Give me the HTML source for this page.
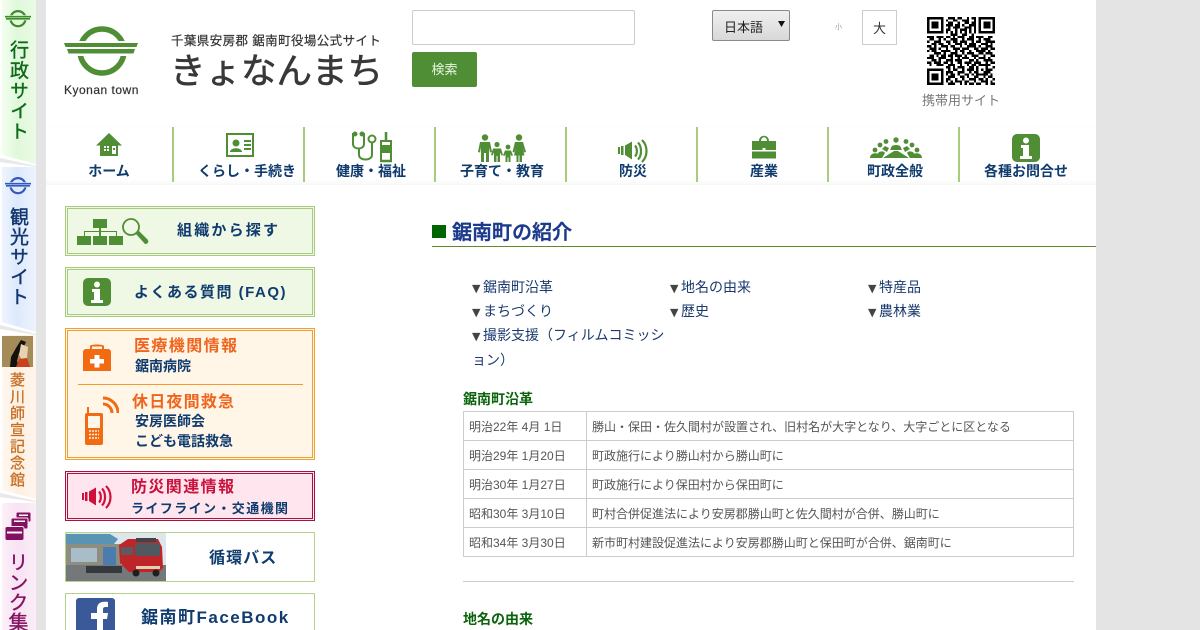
<!DOCTYPE html>
<html lang="ja"><head><meta charset="utf-8"><title>きょなんまち</title>
<style>
html,body{margin:0;padding:0;width:1200px;height:630px;overflow:hidden;background:#e4e4e4}
body{position:relative;font-family:"Liberation Sans","Noto Sans CJK JP",sans-serif;color:#444}
.a{position:absolute;white-space:nowrap;line-height:1}
#w{position:absolute;left:46px;top:0;width:1050px;height:630px;background:#fff}
.tab{position:absolute;left:0;width:36px;background:#fff}
.tab i{position:absolute;left:2px;top:0;right:0;bottom:0}
.v{position:absolute;writing-mode:vertical-rl;white-space:nowrap;line-height:1}
.sep{position:absolute;top:127px;width:2px;height:55px;background:#a9cb7e}
.nl{position:absolute;top:163px;width:130px;text-align:center;font-size:14px;font-weight:700;color:#0f3b6e;line-height:16px}
.box{position:absolute;left:65px;width:248px;box-sizing:content-box;border:1px solid}
.box b{position:absolute;left:1px;top:1px;right:1px;bottom:1px;border:1px solid}
.t{font-weight:700;color:#0f3b6e}
.lk{position:absolute;font-size:14px;line-height:24px;color:#1a3a6e;white-space:nowrap}
.lk s{text-decoration:none;color:#444;font-family:"DejaVu Sans",sans-serif;font-size:11px;display:inline-block;width:11px;text-indent:0;overflow:visible}
table{position:absolute;left:463px;top:411px;width:611px;border-collapse:collapse;font-size:12px;color:#555;table-layout:fixed}
td{border:1px solid #ccc;height:28px;padding:2px 5px 0;box-sizing:border-box;line-height:14px;white-space:nowrap}
tr{height:29px}
h3{position:absolute;margin:0;left:463px;font-size:14px;line-height:16px;color:#0b640b;font-weight:700}
</style></head><body>
<div id="w"></div>

<!-- side tabs -->
<div class="tab" style="top:0;height:165px"><i style="background:linear-gradient(90deg,#f3fff0,#e0f8da 45%,#eafbe5)"></i></div>
<svg class="a" style="left:0;top:155px" width="46" height="14"><polygon points="0,0 2,0 36,9 36,14 0,14" fill="#fff"/><polygon points="0,3 36,11 36,12 0,7" fill="#e8e8e8"/></svg>
<svg class="a" style="left:5px;top:10px" width="26" height="18" viewBox="0 0 76 52"><circle cx="38" cy="25" r="22" fill="none" stroke="#3f8a2a" stroke-width="6.500"/><rect y="15" width="76" height="15" fill="#e4f9de"/><path d="M0 17h76v4.500H0zM3 23h70v5H3z" fill="#3f8a2a"/></svg>
<div class="v" style="left:8px;top:40px;font-size:19px;letter-spacing:1.300px;color:#0c6a18;-webkit-text-stroke:.4px #0c6a18">行政サイト</div>

<div class="tab" style="top:167px;height:165px"><i style="background:linear-gradient(90deg,#eef4ff,#dde9fb 45%,#eef4fe)"></i></div>
<svg class="a" style="left:0;top:322px" width="46" height="14"><polygon points="0,0 2,0 36,10 36,14 0,14" fill="#fff"/><polygon points="0,3 36,12 36,13 0,7" fill="#e8e8e8"/></svg>
<svg class="a" style="left:5px;top:177px" width="26" height="18" viewBox="0 0 76 52"><circle cx="38" cy="25" r="22" fill="none" stroke="#3558c0" stroke-width="6.500"/><rect y="15" width="76" height="15" fill="#e2ecfb"/><path d="M0 17h76v4.500H0zM3 23h70v5H3z" fill="#3558c0"/></svg>
<div class="v" style="left:8px;top:207px;font-size:19px;letter-spacing:1px;color:#12366e;-webkit-text-stroke:.4px #12366e">観光サイト</div>

<div class="tab" style="top:335px;height:165px"><i style="background:linear-gradient(90deg,#fff8f1,#fdf0e2 45%,#fff5ec)"></i></div>
<svg class="a" style="left:2px;top:336px" width="31" height="31" viewBox="0 0 31 31"><rect width="31" height="31" fill="#a58b58"/><path d="M8 31 9 21 14 12 19 4 24 6 21 12 17 17 15 25 17 31z" fill="#15100c"/><path d="M19 8 26 11 25 22 20 24 17 19z" fill="#e8d2b4"/><path d="M14 31 17 23 25 22 28 31z" fill="#c8401e"/></svg>
<div class="v" style="left:9px;top:372px;font-size:15px;letter-spacing:1.600px;color:#c56f24;-webkit-text-stroke:.3px #c56f24">菱川師宣記念館</div>
<svg class="a" style="left:0;top:490px" width="46" height="14"><polygon points="0,0 2,0 36,9 36,14 0,14" fill="#fff"/><polygon points="0,3 36,11 36,12 0,7" fill="#e8e8e8"/></svg>

<div class="tab" style="top:503px;height:127px"><i style="background:linear-gradient(90deg,#fdf0f9,#f8e2f3 45%,#fbeef8)"></i></div>
<svg class="a" style="left:4px;top:511px" width="28" height="30" viewBox="0 0 28 30"><g fill="#82125f" stroke="#fae8f6" stroke-width="1"><rect x="12" y="1" width="15" height="10" rx="1.500"/><rect x="7" y="7" width="17" height="11" rx="1.500"/><rect x="1" y="15.500" width="19" height="14" rx="2"/></g><path d="M3 20.500h15v2H3zM15 3.500h9v1.500h-9zM10 9.500h11v1.500H10z" fill="#fff"/></svg>
<div class="v" style="left:6px;top:552px;font-size:20px;letter-spacing:0;color:#82125f;-webkit-text-stroke:.3px #82125f">リンク集</div>

<!-- logo -->
<svg class="a" style="left:64px;top:26px" width="76" height="52" viewBox="0 0 76 52">
<circle cx="38" cy="25" r="22" fill="none" stroke="#4f8e35" stroke-width="5.500"/>
<rect x="0" y="15" width="76" height="15" fill="#fff"/>
<path d="M0 17h74l-1.500 4H1.500zM3 23h68l-1.500 4.500H4.500z" fill="#4f8e35"/>
</svg>
<div class="a" style="left:64px;top:84px;font-size:12px;letter-spacing:.5px;color:#333;-webkit-text-stroke:.2px #333">Kyonan town</div>
<div class="a" style="left:171px;top:35px;font-size:12.500px;letter-spacing:.4px;color:#333;-webkit-text-stroke:.2px #333">千葉県安房郡 鋸南町役場公式サイト</div>
<div class="a" style="left:170px;top:52px;font-size:35.500px;color:#383838;line-height:38px;-webkit-text-stroke:.6px #383838">きょなんまち</div>

<!-- search -->
<div class="a" style="left:412px;top:10px;width:221px;height:33px;border:1px solid #ccc;border-radius:2px;background:#fff"></div>
<div class="a" style="left:412px;top:52px;width:65px;height:35px;background:#4f8e35;border-radius:2px;color:#e8f4e0;font-size:13px;line-height:35px;text-align:center">検索</div>
<div class="a" style="left:712px;top:10px;width:76px;height:29px;border:1px solid #8a8a8a;border-radius:2px;background:linear-gradient(#f0f0f0,#d8d8d8);color:#222;font-size:13px;line-height:33px;text-indent:11px">日本語</div>
<svg class="a" style="left:778px;top:21px" width="7" height="6"><polygon points="0,0 7,0 3.500,6" fill="#111"/></svg>
<div class="a" style="left:835px;top:24px;font-size:7px;color:#999">小</div>
<div class="a" style="left:862px;top:10px;width:33px;height:33px;border:1px solid #ccc;color:#333;font-size:13px;line-height:35px;text-align:center;background:#fff">大</div>

<!-- QR -->
<svg class="a" style="left:927px;top:17px" width="68" height="68" viewBox="0 0 29 29" shape-rendering="crispEdges">
<g fill="#000"><path fill-rule="evenodd" d="M0 0h7v7H0zM1 1v5h5V1zM2 2h3v3H2zM22 0h7v7h-7zM23 1v5h5V1zM24 2h3v3h-3zM0 22h7v7H0zM1 23v5h5v-5zM2 24h3v3H2z"/></g>
<path stroke="#000" fill="none" d="M9 .5h3M13 .5h2M17 .5h1M19 .5h2M8 1.500h1M11 1.500h2M15 1.500h3M20 1.500h1M9 2.500h2M13 2.500h1M16 2.500h2M19 2.500h2M8 3.500h3M12 3.500h2M15 3.500h1M18 3.500h3M9 4.500h1M11 4.500h3M16 4.500h3M20 4.500h1M8 5.500h2M12 5.500h1M14 5.500h3M18 5.500h1M20 5.500h1M8 6.500h1M10 6.500h1M12 6.500h1M14 6.500h1M16 6.500h1M18 6.500h1M20 6.500h1M10 7.500h3M15 7.500h2M19 7.500h1M0 8.500h3M4 8.500h3M8 8.500h2M11 8.500h1M13 8.500h3M18 8.500h2M21 8.500h3M26 8.500h2M1 9.500h2M5 9.500h1M7 9.500h1M10 9.500h3M15 9.500h1M17 9.500h3M22 9.500h1M24 9.500h3M0 10.500h1M3 10.500h3M8 10.500h2M11 10.500h2M14 10.500h3M19 10.500h1M21 10.500h2M25 10.500h4M2 11.500h2M5 11.500h2M9 11.500h1M12 11.500h3M16 11.500h1M18 11.500h3M23 11.500h3M27 11.500h1M0 12.500h2M3 12.500h1M6 12.500h3M10 12.500h2M14 12.500h1M17 12.500h4M22 12.500h1M25 12.500h3M1 13.500h3M5 13.500h1M8 13.500h1M11 13.500h3M15 13.500h3M20 13.500h2M23 13.500h3M27 13.500h2M0 14.500h1M2 14.500h2M6 14.500h4M12 14.500h1M14 14.500h2M18 14.500h1M21 14.500h4M26 14.500h1M3 15.500h3M7 15.500h1M10 15.500h3M15 15.500h1M17 15.500h3M22 15.500h2M25 15.500h3M1 16.500h2M4 16.500h1M6 16.500h2M9 16.500h2M12 16.500h3M16 16.500h1M19 16.500h3M24 16.500h1M27 16.500h2M0 17.500h3M5 17.500h3M10 17.500h1M13 17.500h1M15 17.500h3M20 17.500h1M22 17.500h3M26 17.500h1M2 18.500h2M5 18.500h1M8 18.500h3M12 18.500h3M18 18.500h2M21 18.500h1M24 18.500h4M0 19.500h2M3 19.500h3M7 19.500h2M10 19.500h1M13 19.500h2M16 19.500h3M20 19.500h3M25 19.500h1M27 19.500h2M1 20.500h1M4 20.500h3M9 20.500h3M14 20.500h1M17 20.500h1M19 20.500h2M22 20.500h5M8 21.500h2M11 21.500h1M13 21.500h3M18 21.500h2M21 21.500h1M25 21.500h1M28 21.500h1M9 22.500h1M11 22.500h2M15 22.500h1M17 22.500h3M21 22.500h1M23 22.500h1M25 22.500h3M8 23.500h3M13 23.500h3M18 23.500h1M20 23.500h2M24 23.500h3M8 24.500h1M10 24.500h2M13 24.500h1M16 24.500h2M19 24.500h1M21 24.500h5M27 24.500h1M9 25.500h3M14 25.500h2M17 25.500h1M20 25.500h2M24 25.500h1M26 25.500h2M8 26.500h2M12 26.500h1M15 26.500h1M18 26.500h3M22 26.500h2M25 26.500h1M28 26.500h1M8 27.500h1M10 27.500h1M12 27.500h3M16 27.500h2M20 27.500h1M23 27.500h3M27 27.500h1M9 28.500h3M14 28.500h1M16 28.500h1M18 28.500h2M21 28.500h2M25 28.500h1M27 28.500h2"/>
</svg>
<div class="a" style="left:922px;top:94px;font-size:13px;letter-spacing:0;color:#777">携帯用サイト</div>

<!-- nav -->
<div class="a" style="left:46px;top:125px;width:1050px;height:60px;background:linear-gradient(#fdfdfd,#fff 8%,#fff 90%,#f8f8f8);"></div>
<div class="sep" style="left:172px"></div><div class="sep" style="left:303px"></div><div class="sep" style="left:434px"></div><div class="sep" style="left:565px"></div><div class="sep" style="left:696px"></div><div class="sep" style="left:827px"></div><div class="sep" style="left:958px"></div>
<div class="nl" style="left:44px">ホーム</div><div class="nl" style="left:182px">くらし・手続き</div><div class="nl" style="left:306px">健康・福祉</div><div class="nl" style="left:437px">子育て・教育</div><div class="nl" style="left:568px">防災</div><div class="nl" style="left:699px">産業</div><div class="nl" style="left:830px">町政全般</div><div class="nl" style="left:961px">各種お問合せ</div>

<svg class="a" style="left:96px;top:133px" width="26" height="24" viewBox="0 0 26 24"><path d="M13 0 26 12.500H22V23H4V12.500H0z" fill="#4f8e35"/><path d="M8 13h2v2H8zM11 13h2v2h-2zM8 16h2v2H8zM11 16h2v2h-2zM16 13h4v8h-4z" fill="#fff"/><rect x="17" y="15" width="2" height="2" fill="#4f8e35"/></svg>
<svg class="a" style="left:226px;top:133px" width="28" height="24" viewBox="0 0 28 24"><rect x="1" y="1" width="26" height="22" fill="#fff" stroke="#4f8e35" stroke-width="2"/><circle cx="10" cy="10" r="3.500" fill="#4f8e35"/><path d="M4 19c0-5 12-5 12 0z" fill="#4f8e35"/><path d="M18 7h7v2h-7zM18 11h7v2h-7zM18 15h7v2h-7z" fill="#4f8e35"/></svg>
<svg class="a" style="left:350px;top:131px" width="44" height="32" viewBox="0 0 44 32" fill="none" stroke="#4f8e35" stroke-width="2"><path d="M5 3H3V13C3 19 14 19 14 13V3H11"/><path d="M9 18V24C9 30 22 30 22 24V12"/><circle cx="22" cy="8" r="3.500"/><circle cx="5" cy="3" r="1.500" fill="#4f8e35"/><circle cx="12" cy="3" r="1.500" fill="#4f8e35"/><path d="M31 10h10v20H31z" stroke-width="2"/><path d="M36 1v9M30 30h12" stroke-width="2.500"/><path d="M31 15h10v6H31z" fill="#4f8e35"/></svg>
<svg class="a" style="left:477px;top:134px" width="50" height="29" viewBox="0 0 50 29" fill="#4f8e35"><circle cx="8" cy="3.500" r="3.200"/><path d="M3 8h10l2 10-2 .5-1-5V28H9V19H7v9H4V13l-1 5.500-2-.5z"/><circle cx="20" cy="10.500" r="2.600"/><path d="M16 14.500h8l2 6.500-1.500.5-1.500-3V28h-2.500V22h-1v6H17V18.500l-1.500 3L14 21z"/><circle cx="31" cy="13" r="2.400"/><path d="M28 16.500h6l2 5-1.500.5-1-2V28H31.500V23.500h-1V28H28.500V20l-1 2-1.500-.5z"/><circle cx="42" cy="3.500" r="3.200"/><path d="M38 8h8l3 10-2 .5-1.500-5 2 8h-2.500V28h-2.500V21.500h-1V28H39.500V21.500H37l2-8-1.500 5-2-.5z"/></svg>
<svg class="a" style="left:618px;top:139px" width="31" height="24" viewBox="0 0 31 24" fill="#4f8e35"><rect y="8" width="2" height="7"/><rect x="3" y="7" width="2.500" height="9"/><path d="M7 6.500 14 2.500V20.500L7 16z"/><path d="M17 6.500c2.500 3 2.500 8 0 11M20 3.500c4 4 4 13 0 17M24 1c6 6 6 16 0 22" fill="none" stroke="#4f8e35" stroke-width="2.200"/></svg>
<svg class="a" style="left:752px;top:135px" width="24" height="25" viewBox="0 0 24 25" fill="#4f8e35"><path d="M7 6C7 -1 17 -1 17 6H15C15 1 9 1 9 6z"/><rect y="6" width="24" height="9"/><rect y="16.500" width="24" height="7"/><rect x="10.500" y="13" width="3" height="2" fill="#fff"/></svg>
<svg class="a" style="left:870px;top:137px" width="52" height="21" viewBox="0 0 52 21" fill="#4f8e35"><circle cx="26" cy="3" r="2.700"/><circle cx="16" cy="4.500" r="2.400"/><circle cx="36" cy="4.500" r="2.400"/><circle cx="10" cy="8" r="2.400"/><circle cx="42" cy="8" r="2.400"/><circle cx="5" cy="13" r="2.400"/><circle cx="47" cy="13" r="2.400"/><path d="M21 11c0-4 10-4 10 0l1 2H20zM12 12l3-3 4 2-2 4zM40 12l-3-3-4 2 2 4zM0 21c0-6 9-6 9-2l-1 2zM52 21c0-6-9-6-9-2l1 2zM7 19c0-5 7-6 8-3l-3 5H7zM45 19c0-5-7-6-8-3l3 5h5zM13 21 24 14h4L39 21z"/></svg>
<svg class="a" style="left:1012px;top:134px" width="28" height="28" viewBox="0 0 28 28"><rect width="28" height="28" rx="5" fill="#4f8e35"/><circle cx="14" cy="6.500" r="3" fill="#fff"/><path d="M9 11h8v11h3v3H8v-3h3v-8H9z" fill="#fff"/></svg>

<!-- sidebar -->
<div class="box" style="top:206px;height:48px;border-color:#a9cb7e;background:#eef8e4"><b style="border-color:#a9cb7e"></b></div>
<svg class="a" style="left:77px;top:218px" width="72" height="28" viewBox="0 0 72 28" fill="#4f8e35"><rect x="16" y="1" width="14" height="9"/><rect y="18" width="14" height="9"/><rect x="16" y="18" width="14" height="9"/><rect x="32" y="18" width="14" height="9"/><path d="M22 10h2v3h16v5h-1v-4H24v4h-2v-4H8v4H7v-5h15z"/><circle cx="54" cy="9" r="8" fill="none" stroke="#4f8e35" stroke-width="1.800"/><path d="M59 16l3-3 9 9c1 3-1 4-3 4z"/></svg>
<div class="a t" style="left:177px;top:223px;font-size:15px;letter-spacing:2.200px">組織から探す</div>

<div class="box" style="top:267px;height:48px;border-color:#a9cb7e;background:#eef8e4"><b style="border-color:#a9cb7e"></b></div>
<svg class="a" style="left:83px;top:278px" width="28" height="28" viewBox="0 0 28 28"><rect width="28" height="28" rx="5" fill="#4f8e35"/><circle cx="14" cy="6.500" r="3" fill="#fff"/><path d="M9 11h8v11h3v3H8v-3h3v-8H9z" fill="#fff"/></svg>
<div class="a t" style="left:134px;top:285px;font-size:15px;letter-spacing:1.500px">よくある質問 (FAQ)</div>

<div class="box" style="top:328px;height:130px;border-color:#f0a030;background:#fff6e8"><b style="border-color:#f0a030"></b></div>
<svg class="a" style="left:83px;top:343px" width="28" height="29" viewBox="0 0 28 29"><path d="M7 7V3c0-2 14-2 14 0v4h-2V3.500H9V7z" fill="#f26a12"/><path d="M2 6h24l2 2v20H0V8z" fill="#f26a12"/><path d="M11.500 12h5v4h4.500v4.500h-4.500v4h-5v-4H7V16h4.500z" fill="#fff"/></svg>
<div class="a" style="left:134px;top:339px;font-size:16px;letter-spacing:1.400px;color:#f0651e;font-weight:700">医療機関情報</div>
<div class="a t" style="left:135px;top:359px;font-size:14px">鋸南病院</div>
<div class="a" style="left:78px;top:384px;width:225px;height:1px;background:#f09a30"></div>
<svg class="a" style="left:85px;top:396px" width="34" height="49" viewBox="0 0 34 49"><path d="M2 17V11h2v6h12a2 2 0 0 1 2 2v28a2 2 0 0 1-2 2H2a2 2 0 0 1-2-2V19a2 2 0 0 1 2-2z" fill="#f26a12"/><rect x="3" y="20" width="12" height="12" fill="#fff6e8"/><path d="M4 35h10M4 38.500h10M4 42h10" stroke="#fff6e8" stroke-width="1.500" stroke-dasharray="2 1"/><path d="M18 8a9 9 0 0 1 9 9M18 2a15 15 0 0 1 15 15" fill="none" stroke="#f26a12" stroke-width="3"/></svg>
<div class="a" style="left:132px;top:395px;font-size:16px;letter-spacing:1.200px;color:#f0651e;font-weight:700">休日夜間救急</div>
<div class="a t" style="left:135px;top:414px;font-size:14px">安房医師会</div>
<div class="a t" style="left:135px;top:434px;font-size:14px">こども電話救急</div>

<div class="box" style="top:471px;height:48px;border-color:#a8123f;background:#ffe6ee"><b style="border-color:#a8123f"></b></div>
<svg class="a" style="left:82px;top:485px" width="31" height="24" viewBox="0 0 31 24" fill="#d0103c"><rect y="8" width="2" height="7"/><rect x="3" y="7" width="2.500" height="9"/><path d="M7 6.500 14 2.500V20.500L7 16z"/><path d="M17 6.500c2.500 3 2.500 8 0 11M20 3.500c4 4 4 13 0 17M24 1c6 6 6 16 0 22" fill="none" stroke="#d0103c" stroke-width="2.200"/></svg>
<div class="a" style="left:131px;top:480px;font-size:16px;letter-spacing:1.400px;color:#c8103c;font-weight:700">防災関連情報</div>
<div class="a t" style="left:131px;top:502px;font-size:13px;letter-spacing:1.400px">ライフライン・交通機関</div>

<div class="box" style="top:532px;height:48px;border-color:#b6d38e;background:#fff"></div>
<svg class="a" style="left:66px;top:533px" width="100" height="48" viewBox="0 0 100 48"><rect width="100" height="48" fill="#dce6ec"/><path d="M0 1H44L52 6 48 11H0z" fill="#5a94b4"/><rect y="11" width="55" height="21" fill="#8e8e80"/><rect x="5" y="15" width="26" height="14" fill="#a8bdc8"/><rect x="37" y="14" width="13" height="18" fill="#4a7cb0"/><rect y="32" width="100" height="16" fill="#74787a"/><path d="M20 33h36v7H20z" fill="#35393e"/><path d="M53 12 62 6H92L96 14 97 35 93 39H63L54 30z" fill="#be2428"/><rect x="69" y="10" width="25" height="13" rx="2" fill="#505860"/><rect x="55" y="14" width="12" height="8" fill="#5e5860"/><rect x="70" y="5" width="20" height="4" fill="#444"/><rect x="70" y="33" width="24" height="3" fill="#e0d0b0"/><circle cx="70" cy="40" r="3.500" fill="#1e1e1e"/><circle cx="90" cy="40" r="3.500" fill="#1e1e1e"/></svg>
<div class="a t" style="left:209px;top:551px;font-size:16px;letter-spacing:1.100px">循環バス</div>

<div class="box" style="top:593px;height:60px;border-color:#b6d38e;background:#fff"></div>
<svg class="a" style="left:76px;top:598px" width="39" height="32" viewBox="0 0 39 32"><path d="M3 0h33a3 3 0 0 1 3 3v29H0V3a3 3 0 0 1 3-3z" fill="#3b5998"/><path d="M21 32V21h-6v-6h6v-4c0-6 4-8 11-7v5c-4 0-5 0-5 3v3h5l-1 6h-4v11z" fill="#fff"/></svg>
<div class="a t" style="left:141px;top:609px;font-size:17px;letter-spacing:1.500px">鋸南町FaceBook</div>

<!-- content -->
<div class="a" style="left:432px;top:225px;width:14px;height:13px;background:#006400"></div>
<div class="a" style="left:452px;top:222px;font-size:20px;line-height:22px;color:#1c3a8c;font-weight:500;-webkit-text-stroke:.5px #1c3a8c">鋸南町の紹介</div>
<div class="a" style="left:432px;top:246px;width:664px;height:1px;background:#5e8a2a"></div>

<div class="lk" style="left:472px;top:275px"><s>▼</s>鋸南町沿革</div>
<div class="lk" style="left:670px;top:275px"><s>▼</s>地名の由来</div>
<div class="lk" style="left:868px;top:275px"><s>▼</s>特産品</div>
<div class="lk" style="left:472px;top:299px"><s>▼</s>まちづくり</div>
<div class="lk" style="left:670px;top:299px"><s>▼</s>歴史</div>
<div class="lk" style="left:868px;top:299px"><s>▼</s>農林業</div>
<div class="lk" style="left:472px;top:323px"><s>▼</s>撮影支援（フィルムコミッシ</div>
<div class="lk" style="left:472px;top:348px">ョン）</div>

<h3 style="top:391px">鋸南町沿革</h3>
<table>
<colgroup><col style="width:123px"><col></colgroup>
<tr><td>明治22年 4月 1日</td><td>勝山・保田・佐久間村が設置され、旧村名が大字となり、大字ごとに区となる</td></tr>
<tr><td>明治29年 1月20日</td><td>町政施行により勝山村から勝山町に</td></tr>
<tr><td>明治30年 1月27日</td><td>町政施行により保田村から保田町に</td></tr>
<tr><td>昭和30年 3月10日</td><td>町村合併促進法により安房郡勝山町と佐久間村が合併、勝山町に</td></tr>
<tr><td>昭和34年 3月30日</td><td>新市町村建設促進法により安房郡勝山町と保田町が合併、鋸南町に</td></tr>
</table>
<div class="a" style="left:463px;top:581px;width:611px;height:1px;background:#ccc"></div>
<h3 style="top:611px">地名の由来</h3>
</body></html>
